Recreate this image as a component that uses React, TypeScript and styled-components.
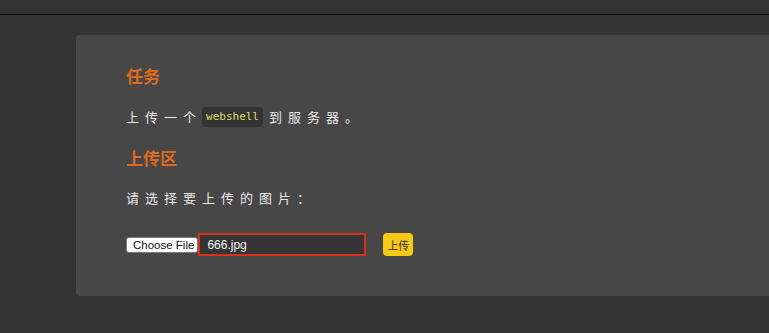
import React from "react";
import styled, { createGlobalStyle } from "styled-components";

const Global = createGlobalStyle`
  html, body { margin: 0; padding: 0; background: #333333; }
  body { font-family: "Noto Sans CJK SC", "Noto Sans", sans-serif; }
`;

const Page = styled.div`
  width: 769px;
  height: 333px;
  background: #333333;
  overflow: hidden;
  display: flex;
  flex-direction: column;
`;

const TopBar = styled.div`
  height: 14px;
  background: #333333;
  border-bottom: 1px solid #0c0c0c;
  flex-shrink: 0;
`;

const Main = styled.div`
  padding: 20px 0 0 76px;
`;

const Card = styled.div`
  width: 720px;
  height: 261px;
  background: #474747;
  border-radius: 4px 0 0 4px;
  box-sizing: border-box;
  padding: 29px 50px 0 50px;
  display: flex;
  flex-direction: column;
`;

const Title = styled.h2<{ $mt?: number }>`
  margin: ${(p) => p.$mt ?? 0}px 0 0 0;
  font-size: 17px;
  line-height: 24px;
  font-weight: 700;
  color: #df6a1f;
`;

const Para = styled.p<{ $mt: number }>`
  margin: ${(p) => p.$mt}px 0 0 0;
  font-size: 13px;
  line-height: 20px;
  letter-spacing: 6px;
  color: #e6e6e6;
  display: flex;
  align-items: center;
`;

const Code = styled.code`
  font-family: "DejaVu Sans Mono", "Liberation Mono", monospace;
  font-size: 11px;
  letter-spacing: 0;
  color: #dede6c;
  background: #333333;
  border-radius: 4px;
  padding: 3px 4px;
  margin-right: 6px;
  line-height: 14px;
`;

const Form = styled.div`
  margin-top: 25px;
  display: flex;
  align-items: center;
`;

const FileWrap = styled.div`
  display: flex;
  align-items: center;
`;

const ChooseBtn = styled.span`
  display: inline-flex;
  align-items: center;
  height: 16px;
  box-sizing: border-box;
  padding: 0 3px 0 6px;
  background: #ffffff;
  border: 1px solid #7a7a7a;
  border-radius: 3px;
  font-family: "Liberation Sans", Arial, sans-serif;
  font-size: 11.5px;
  color: #111;
`;

const FileName = styled.span`
  display: inline-flex;
  align-items: center;
  width: 168px;
  height: 23px;
  box-sizing: border-box;
  border: 2px solid #d6321b;
  background: #353535;
  padding-left: 7px;
  font-family: "Liberation Sans", Arial, sans-serif;
  font-size: 12px;
  color: #f2f2f2;
`;

const UploadBtn = styled.button`
  margin-left: 17px;
  height: 23px;
  width: 30px;
  padding: 0;
  border: none;
  border-radius: 4px;
  background: #f7c816;
  color: #333;
  font-family: "Noto Sans CJK SC", sans-serif;
  font-size: 11px;
  cursor: pointer;
`;

export default function App() {
  return (
    <>
      <Global />
      <Page>
        <TopBar />
        <Main>
          <Card>
            <Title>任务</Title>
            <Para $mt={19}>
              上传一个<Code>webshell</Code>到服务器。
            </Para>
            <Title $mt={19}>上传区</Title>
            <Para $mt={18}>请选择要上传的图片：</Para>
            <Form>
              <FileWrap>
                <ChooseBtn>Choose File</ChooseBtn>
                <FileName>666.jpg</FileName>
              </FileWrap>
              <UploadBtn>上传</UploadBtn>
            </Form>
          </Card>
        </Main>
      </Page>
    </>
  );
}
